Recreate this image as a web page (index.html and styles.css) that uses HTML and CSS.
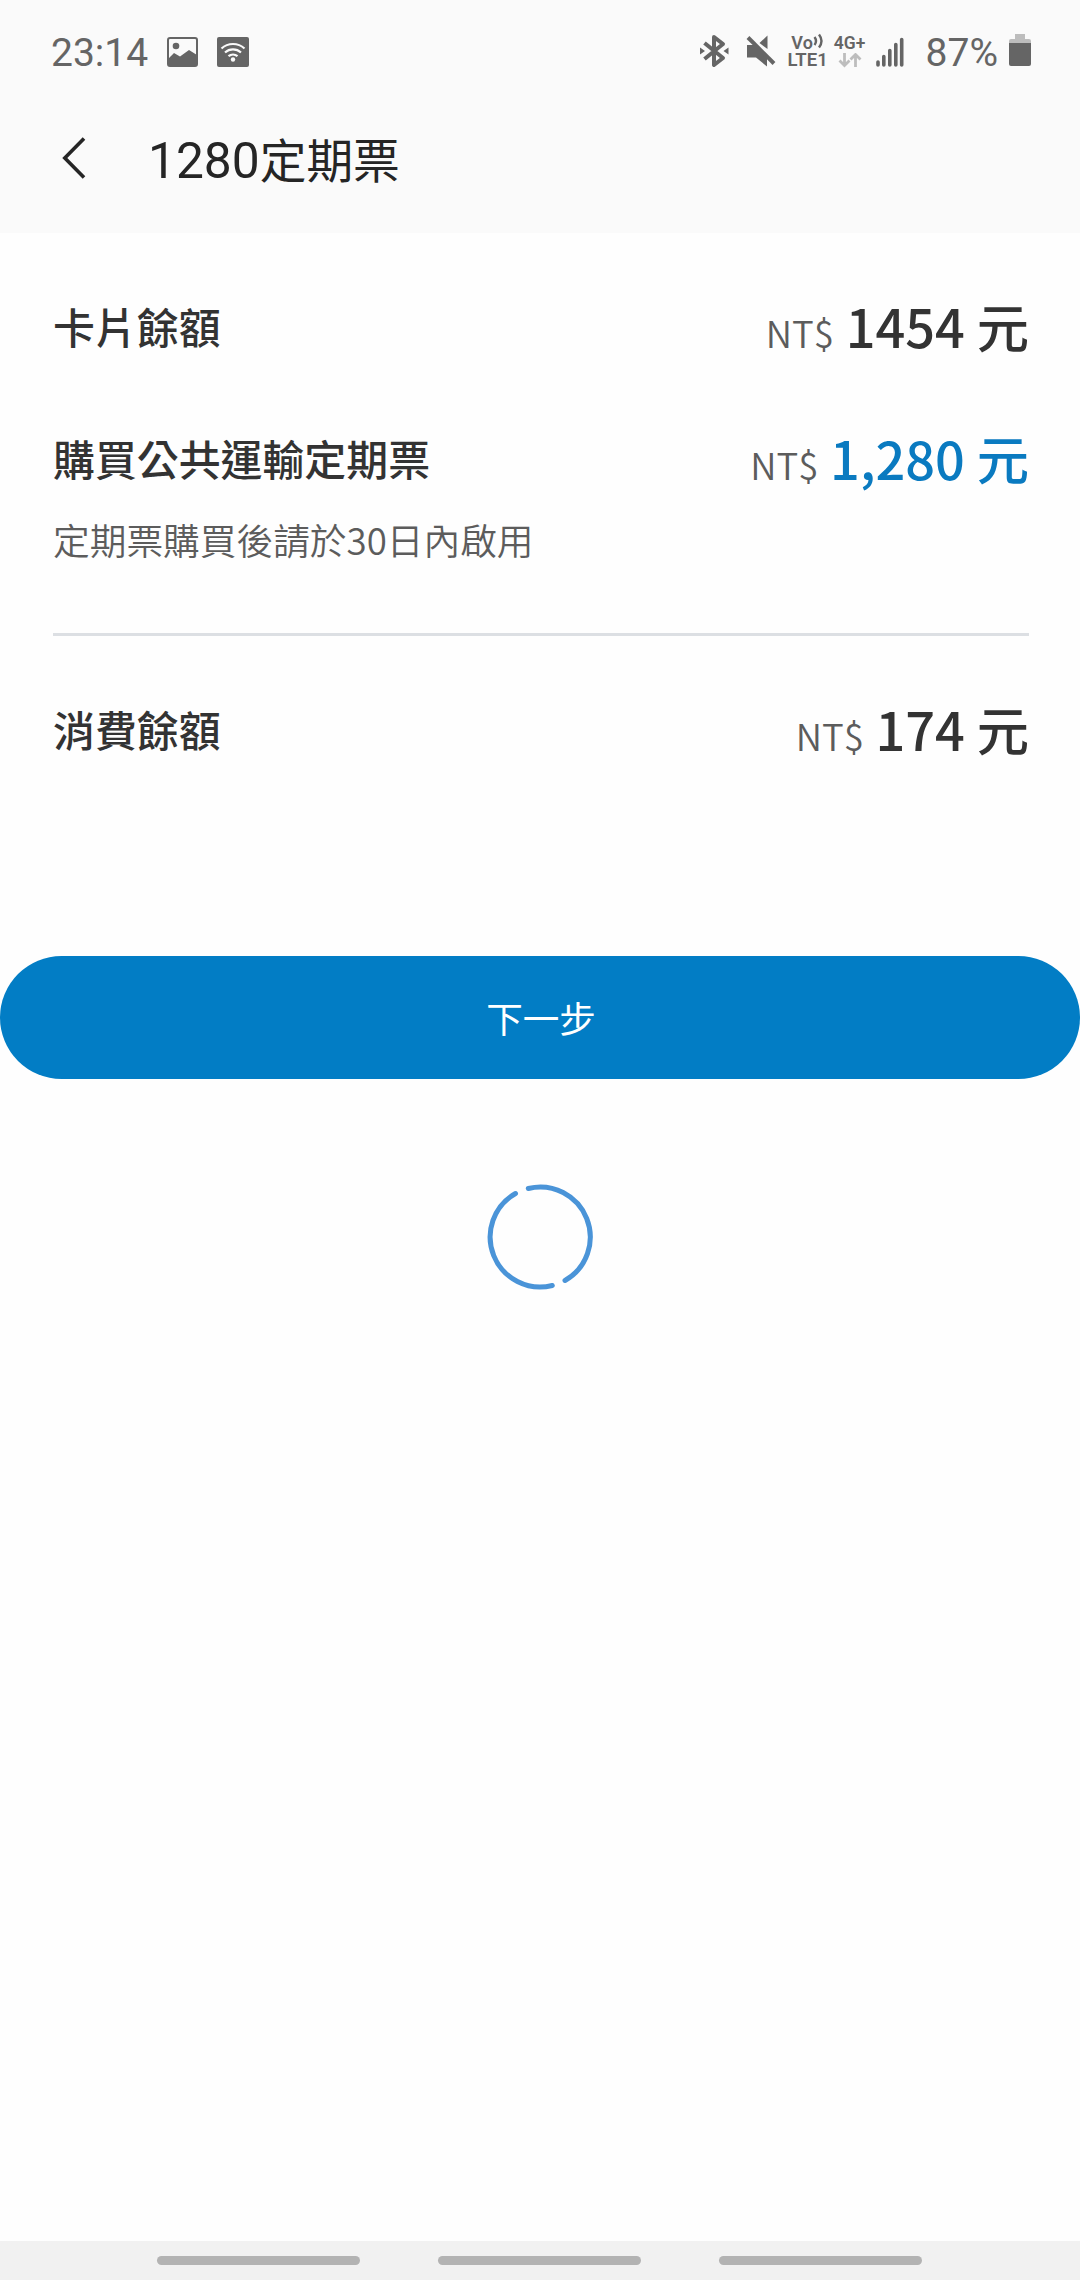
FILE: index.html
```html
<!DOCTYPE html>
<html lang="zh-Hant">
<head>
    <meta charset="UTF-8">
    <meta name="viewport" content="width=device-width, initial-scale=1.0">
    <title>1280定期票</title>
    <link rel="stylesheet" href="styles.css">
</head>
<body>

    <!-- Status Bar -->
    <div class="status-bar">
        <div class="status-left">
            <span class="clock">23:14</span>
            <svg class="icon-photo" width="31" height="30" viewBox="0 0 31 30">
                <rect x="1" y="1" width="29" height="28" rx="2" fill="#fafafa" stroke="#656565" stroke-width="2"/>
                <circle cx="9" cy="9" r="3.3" fill="#656565"/>
                <path d="M1 22l6-6 6 3.500 9-6.500 8 5v11H1z" fill="#656565"/>
            </svg>
            <svg class="icon-wifi" width="32" height="30" viewBox="0 0 32 30">
                <rect width="32" height="30" rx="2" fill="#656565"/>
                <g fill="none" stroke="#fafafa" stroke-width="2.2">
                    <path d="M4.5 11.5a17 17 0 0 1 23 0M8 15.5a12 12 0 0 1 16 0M11.5 19.2a7 7 0 0 1 9 0"/>
                </g>
                <circle cx="16" cy="22.5" r="2.2" fill="#fafafa"/>
            </svg>
        </div>
        <div class="status-right">
            <svg class="icon-bluetooth" width="30" height="34" viewBox="0 0 30 34">
                <path d="M5.500 9L24 24L15 31V3L24 10L5.500 25" fill="none" stroke="#656565" stroke-width="4" stroke-linejoin="round"/>
                <path d="M1 13.500l5 3.500-5 3.500zM29.500 13.500l-5 3.500 5 3.500z" fill="#656565"/>
            </svg>
            <svg class="icon-mute" width="30" height="32" viewBox="0 0 30 32">
                <path d="M1 10h8l12 12v9.500L10 22.500H1zM13.500 8l8-7.500V14z" fill="#656565"/>
                <path d="M2 2.500l26 26" stroke="#656565" stroke-width="4"/>
            </svg>
            <div class="volte">
                <span class="vo">Vo<svg class="waves" width="11" height="17" viewBox="0 0 11 17"><path d="M1.500 5q3 4 0 8M6 2.500q5 6.500 0 13" fill="none" stroke="#656565" stroke-width="2.400"/></svg></span>
                <span class="lte">LTE1</span>
            </div>
            <div class="network">
                <span class="net-type">4G+</span>
                <svg width="24" height="15" viewBox="0 0 24 15">
                    <path d="M6.500 0v12.500M1.500 7.500l5 5 5-5M17.500 14V1.500M12.500 6.500l5-5 5 5" fill="none" stroke="#bdbdbd" stroke-width="2.800"/>
                </svg>
            </div>
            <svg class="icon-signal" width="28" height="30" viewBox="0 0 28 30">
                <path d="M2 25v3M7.800 19.500v8.500M13.800 13.500v14.500M19.800 7.500v20.500M25.700 2.500v25.500" stroke="#656565" stroke-width="3.600" stroke-linecap="round"/>
            </svg>
            <span class="percent">87%</span>
            <svg class="icon-battery" width="22" height="32" viewBox="0 0 22 32">
                <path d="M6 0h10v5h4q2 0 2 2v2H0V7q0-2 2-2h4z" fill="#bdbdbd"/>
                <path d="M0 9h22v21q0 2-2 2H2q-2 0-2-2z" fill="#656565"/>
            </svg>
        </div>
    </div>

    <!-- Title Bar -->
    <div class="title-bar">
        <svg class="back" width="24" height="42" viewBox="0 0 24 42">
            <path d="M22 1.500L2.800 21L22 40.500" fill="none" stroke="#252525" stroke-width="3.600"/>
        </svg>
        <h1 class="title"><span class="title-num">1280</span>定期票</h1>
    </div>

    <!-- Balance Details -->
    <div class="container">
        <div class="row">
            <span class="label">卡片餘額</span>
            <span class="amount"><span class="currency">NT$</span> 1454 元</span>
        </div>
        <div class="row">
            <span class="label">購買公共運輸定期票</span>
            <span class="amount blue"><span class="currency">NT$</span> 1,280 元</span>
        </div>
        <p class="note">定期票購買後請於30日內啟用</p>
        <div class="row total">
            <span class="label">消費餘額</span>
            <span class="amount"><span class="currency">NT$</span> 174 元</span>
        </div>
    </div>

    <button class="next-button">下一步</button>

    <!-- Loading -->
    <svg class="spinner" width="106" height="106" viewBox="0 0 106 106">
        <path d="M41.300 4.500A50 50 0 0 1 78 96.500M65.300 101.500A50 50 0 0 1 28.500 9.500" fill="none" stroke="#4a94d8" stroke-width="5" stroke-linecap="round"/>
    </svg>

    <!-- Gesture Hints -->
    <div class="nav-bar">
        <div class="hint"></div>
        <div class="hint"></div>
        <div class="hint"></div>
    </div>

</body>
</html>
```
FILE: styles.css
```css
/* Styling */
* {
    box-sizing: border-box;
}
body {
    font-family: "Noto Sans CJK TC", sans-serif;
    background-color: #fefefe;
    color: #333333;
    display: flex;
    flex-direction: column;
    height: 2280px;
    margin: 0;
}

/* Status Bar */
.status-bar {
    display: flex;
    justify-content: space-between;
    height: 100px;
    padding: 0 49px 0 51px;
    background-color: #fafafa;
    color: #656565;
    font-family: Roboto, sans-serif;
}
.status-left, .status-right {
    display: flex;
    align-items: flex-start;
}
.clock, .percent {
    font-size: 39px;
    line-height: 46px;
    margin-top: 30px;
}
.icon-photo {
    margin: 37px 0 0 19px;
}
.icon-wifi {
    margin: 37px 0 0 19px;
}
.icon-bluetooth {
    margin-top: 34px;
}
.icon-mute {
    margin: 35px 0 0 17px;
}
.volte, .network {
    display: flex;
    flex-direction: column;
    align-items: center;
    font-weight: 600;
}
.volte {
    margin: 34px 0 0 12px;
    width: 40px;
}
.vo {
    display: flex;
    font-size: 18px;
    line-height: 17px;
}
.waves {
    flex-shrink: 0;
    margin-top: -2px;
}
.lte {
    font-size: 18.5px;
    line-height: 18px;
}
.network {
    margin: 34px 0 0 6px;
    width: 32px;
}
.net-type {
    font-size: 17.5px;
    line-height: 19px;
}
.icon-signal {
    margin: 37px 0 0 10px;
}
.percent {
    margin-left: 22px;
}
.icon-battery {
    margin: 34px 0 0 11px;
}

/* Title Bar */
.title-bar {
    display: flex;
    align-items: center;
    height: 133px;
    padding: 0 0 17px 62px;
    background-color: #fafafa;
    color: #252525;
}
.title {
    margin: 2px 0 0 62px;
    font-size: 46.7px;
    font-weight: 400;
    line-height: 60px;
}
.title-num {
    font-family: Roboto, sans-serif;
    font-size: 49.7px;
}

/* Balance Details */
.container {
    margin: 0 51px 0 53px;
    padding-top: 52px;
}
.row {
    display: flex;
    justify-content: space-between;
    align-items: center;
    height: 80px;
    margin-bottom: 52px;
}
.label {
    font-size: 41.9px;
    font-weight: 500;
}
.amount {
    font-size: 52.3px;
    font-weight: 500;
}
.currency {
    color: #5c5c5c;
    font-size: 36.6px;
    font-weight: 350;
}
.blue {
    color: #0a7ac0;
}
.blue .currency {
    color: #5c5c5c;
}
.note {
    margin: -36px 0 0;
    height: 123px;
    border-bottom: 3px solid #dcdfe3;
    color: #5c5c5c;
    font-size: 36.7px;
    font-weight: 350;
    line-height: 52px;
}
.total {
    margin: 52px 0 0;
}

.next-button {
    height: 123px;
    margin-top: 188px;
    padding-left: 8px;
    flex-shrink: 0;
    border: none;
    border-radius: 62px;
    background-color: #027dc5;
    color: white;
    font-family: inherit;
    font-size: 36.6px;
}
.spinner {
    align-self: center;
    margin-top: 105px;
}

/* Gesture Hints */
.nav-bar {
    display: flex;
    justify-content: center;
    align-items: center;
    gap: 78px;
    height: 39px;
    margin-top: auto;
    padding-right: 1px;
    background-color: #f1f1f1;
}
.hint {
    width: 203px;
    height: 9px;
    border-radius: 5px;
    background-color: #b3b3b3;
}
```
